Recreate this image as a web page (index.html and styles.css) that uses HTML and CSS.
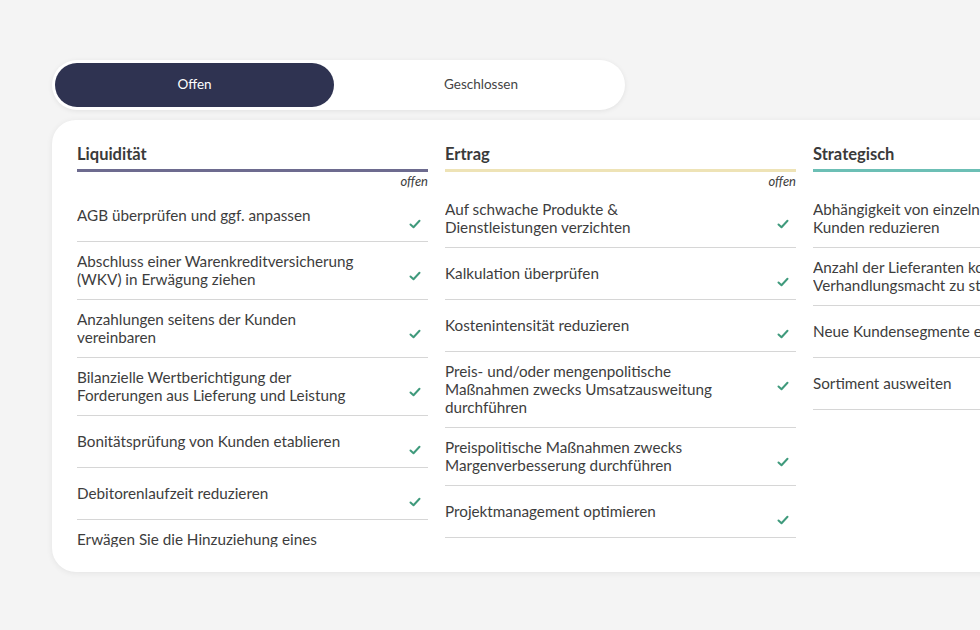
FILE: index.html
```html
<!DOCTYPE html>
<html lang="de">
<head>
<meta charset="utf-8">
<title>Maßnahmen</title>
<link rel="stylesheet" href="styles.css">
</head>
<body>
<div class="page">
  <div class="toggle">
    <button class="tab tab-active">Offen</button>
    <button class="tab tab-second">Geschlossen</button>
  </div>
  <div class="card">
    <div class="columns">
      <section class="col">
        <h2 class="col-title line-purple">Liquidität</h2>
        <div class="col-status">offen</div>
        <div class="list">
          <div class="row"><div class="row-text">AGB überprüfen und ggf. anpassen</div><svg class="check" viewBox="0 0 12 10"><path d="M1.5 5.5 L4.5 8.2 L10.5 1.8"/></svg></div>
          <div class="row"><div class="row-text">Abschluss einer Warenkreditversicherung (WKV) in Erwägung ziehen</div><svg class="check" viewBox="0 0 12 10"><path d="M1.5 5.5 L4.5 8.2 L10.5 1.8"/></svg></div>
          <div class="row"><div class="row-text">Anzahlungen seitens der Kunden vereinbaren</div><svg class="check" viewBox="0 0 12 10"><path d="M1.5 5.5 L4.5 8.2 L10.5 1.8"/></svg></div>
          <div class="row"><div class="row-text">Bilanzielle Wertberichtigung der Forderungen aus Lieferung und Leistung</div><svg class="check" viewBox="0 0 12 10"><path d="M1.5 5.5 L4.5 8.2 L10.5 1.8"/></svg></div>
          <div class="row"><div class="row-text">Bonitätsprüfung von Kunden etablieren</div><svg class="check" viewBox="0 0 12 10"><path d="M1.5 5.5 L4.5 8.2 L10.5 1.8"/></svg></div>
          <div class="row"><div class="row-text">Debitorenlaufzeit reduzieren</div><svg class="check" viewBox="0 0 12 10"><path d="M1.5 5.5 L4.5 8.2 L10.5 1.8"/></svg></div>
          <div class="row"><div class="row-text">Erwägen Sie die Hinzuziehung eines Factoring-Unternehmens</div><svg class="check" viewBox="0 0 12 10"><path d="M1.5 5.5 L4.5 8.2 L10.5 1.8"/></svg></div>
        </div>
      </section>
      <section class="col">
        <h2 class="col-title line-yellow">Ertrag</h2>
        <div class="col-status">offen</div>
        <div class="list">
          <div class="row"><div class="row-text">Auf schwache Produkte &amp; Dienstleistungen verzichten</div><svg class="check" viewBox="0 0 12 10"><path d="M1.5 5.5 L4.5 8.2 L10.5 1.8"/></svg></div>
          <div class="row"><div class="row-text">Kalkulation überprüfen</div><svg class="check" viewBox="0 0 12 10"><path d="M1.5 5.5 L4.5 8.2 L10.5 1.8"/></svg></div>
          <div class="row"><div class="row-text">Kostenintensität reduzieren</div><svg class="check" viewBox="0 0 12 10"><path d="M1.5 5.5 L4.5 8.2 L10.5 1.8"/></svg></div>
          <div class="row"><div class="row-text">Preis- und/oder mengenpolitische Maßnahmen zwecks Umsatzausweitung durchführen</div><svg class="check" viewBox="0 0 12 10"><path d="M1.5 5.5 L4.5 8.2 L10.5 1.8"/></svg></div>
          <div class="row"><div class="row-text">Preispolitische Maßnahmen zwecks Margenverbesserung durchführen</div><svg class="check" viewBox="0 0 12 10"><path d="M1.5 5.5 L4.5 8.2 L10.5 1.8"/></svg></div>
          <div class="row"><div class="row-text">Projektmanagement optimieren</div><svg class="check" viewBox="0 0 12 10"><path d="M1.5 5.5 L4.5 8.2 L10.5 1.8"/></svg></div>
        </div>
      </section>
      <section class="col">
        <h2 class="col-title line-teal">Strategisch</h2>
        <div class="col-status"></div>
        <div class="list">
          <div class="row"><div class="row-text">Abhängigkeit von einzelnen Lieferanten/<wbr>Kunden reduzieren</div><svg class="check" viewBox="0 0 12 10"><path d="M1.5 5.5 L4.5 8.2 L10.5 1.8"/></svg></div>
          <div class="row"><div class="row-text">Anzahl der Lieferanten konsolidieren, um Verhandlungsmacht zu stärken</div><svg class="check" viewBox="0 0 12 10"><path d="M1.5 5.5 L4.5 8.2 L10.5 1.8"/></svg></div>
          <div class="row"><div class="row-text">Neue Kundensegmente erschließen</div><svg class="check" viewBox="0 0 12 10"><path d="M1.5 5.5 L4.5 8.2 L10.5 1.8"/></svg></div>
          <div class="row"><div class="row-text">Sortiment ausweiten</div><svg class="check" viewBox="0 0 12 10"><path d="M1.5 5.5 L4.5 8.2 L10.5 1.8"/></svg></div>
        </div>
      </section>
    </div>
  </div>
</div>
</body>
</html>
```

FILE: styles.css
```css
html, body {
  margin: 0;
  padding: 0;
  height: 100%;
  overflow: hidden;
}

body {
  background: #f4f4f4;
  font-family: Lato, "Open Sans", "Liberation Sans", sans-serif;
  color: #3d3d3d;
}

.page {
  padding: 60px 0 0 52px;
}

.toggle {
  display: flex;
  width: 567px;
  height: 44px;
  padding: 3px;
  background: #ffffff;
  border-radius: 25px;
  box-shadow: 0 1px 5px rgba(0, 0, 0, 0.08);
}

.tab {
  flex: 0 0 279px;
  height: 44px;
  border: none;
  background: transparent;
  border-radius: 22px;
  font-family: inherit;
  font-size: 13.5px;
  color: #444444;
  padding: 0 0 2px 0;
  cursor: pointer;
}

.tab-second {
  flex: 1 1 auto;
  padding-left: 6px;
}

.tab-active {
  background: #2f3351;
  color: #ffffff;
}

.card {
  margin-top: 10px;
  width: 1200px;
  height: 405px;
  padding: 24px 0 23px 25px;
  background: #ffffff;
  border-radius: 24px 0 0 24px;
  box-shadow: 0 1px 6px rgba(0, 0, 0, 0.07);
}

.columns {
  display: flex;
  gap: 17px;
}

.col {
  flex: 0 0 351px;
  width: 351px;
}

.col-title {
  margin: 0;
  font-size: 16.5px;
  font-weight: 700;
  line-height: 20px;
  color: #3a3a3a;
  padding-bottom: 5px;
  border-bottom: 3px solid #6d6b8f;
}

.line-purple { border-bottom-color: #6d6b8f; }
.line-yellow { border-bottom-color: #eee3b6; }
.line-teal { border-bottom-color: #6cbfb5; }

.col-status {
  height: 17px;
  padding-top: 1px;
  text-align: right;
  font-style: italic;
  font-size: 13px;
  line-height: 17px;
  color: #3d3d3d;
}

.list {
  height: 357px;
  overflow: hidden;
}

.row {
  display: flex;
  align-items: center;
  box-sizing: border-box;
  min-height: 52px;
  padding: 10px 0 11px 0;
  border-bottom: 1px solid #d6d6d6;
}

.row-text {
  width: 282px;
  font-size: 15.25px;
  line-height: 18px;
}

.check {
  align-self: flex-start;
  width: 12px;
  height: 10px;
  margin: 19px 7px 0 auto;
  fill: none;
  stroke: #3f9a7c;
  stroke-width: 2;
  stroke-linecap: round;
  stroke-linejoin: round;
}
```
